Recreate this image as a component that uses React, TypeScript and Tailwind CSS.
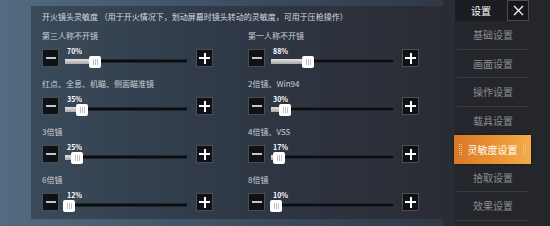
import React from "react";

type Item = { label: string; pct: number; off: number };

const left: Item[] = [
  { label: "第三人称不开镜", pct: 70, off: 24 },
  { label: "红点、全息、机瞄、侧面瞄准镜", pct: 35, off: 11 },
  { label: "3倍镜", pct: 25, off: 6 },
  { label: "6倍镜", pct: 12, off: -2 },
];
const right: Item[] = [
  { label: "第一人称不开镜", pct: 88, off: 31 },
  { label: "2倍镜、Win94", pct: 30, off: 8 },
  { label: "4倍镜、VSS", pct: 17, off: 2 },
  { label: "8倍镜", pct: 10, off: -1 },
];

const menu = ["基础设置", "画面设置", "操作设置", "载具设置", "灵敏度设置", "拾取设置", "效果设置"];

function MinusBtn() {
  return (
    <div className="w-[17px] h-[18px] bg-[#101114] border border-[#4a4d54] flex items-center justify-center shrink-0">
      <div className="w-[10px] h-[2px] bg-[#c4c6ca]" />
    </div>
  );
}

function PlusBtn() {
  return (
    <div className="w-[17px] h-[18px] bg-[#101114] border border-[#4a4d54] flex items-center justify-center shrink-0 relative">
      <div className="absolute w-[11px] h-[2px] bg-white" />
      <div className="absolute w-[2px] h-[11px] bg-white" />
    </div>
  );
}

function Cell({ item }: { item: Item }) {
  return (
    <div className="h-[48px] flex flex-col">
      <div className="text-[8px] leading-[12px] text-[#cdd1d7] whitespace-nowrap">{item.label}</div>
      <div className="mt-[7px] h-[18px] flex items-start">
        <MinusBtn />
        <div className="ml-[6px] w-[122px] flex flex-col">
          <div className="ml-[2px] -mt-[2px] text-[7px] leading-[8px] font-bold text-white">{item.pct}%</div>
          <div className="mt-[4px] h-[4px] bg-[#0b0c0f] border-y border-[#23262d] relative">
            <div
              className="absolute left-0 top-[-1px] h-[5px] bg-gradient-to-b from-[#e2e2e2] to-[#a9a9a9]"
              style={{ width: Math.max(0, item.off + 6) }}
            />
            <div
              className="absolute top-[-4px] w-[12px] h-[12px] bg-white rounded-[2px] flex items-center justify-center gap-[1px]"
              style={{ left: item.off }}
            >
              <div className="w-[1px] h-[6px] bg-[#c0c0c0]" />
              <div className="w-[1px] h-[6px] bg-[#c0c0c0]" />
              <div className="w-[1px] h-[6px] bg-[#c0c0c0]" />
            </div>
          </div>
        </div>
        <div className="ml-[9px]">
          <PlusBtn />
        </div>
      </div>
    </div>
  );
}

function Dots() {
  return (
    <div className="flex flex-col gap-[1px]">
      {[0, 1, 2, 3, 4, 5].map((i) => (
        <div key={i} className="flex gap-[1px]">
          <div className="w-[1px] h-[1px] bg-[#f7c98a]" />
          <div className="w-[1px] h-[1px] bg-[#f7c98a]" />
        </div>
      ))}
    </div>
  );
}

export default function App() {
  return (
    <div
      className="w-[550px] h-[226px] overflow-hidden flex bg-gradient-to-r from-[#536b80] via-[#3a4a5c] to-[#2a2d36]"
      style={{ fontFamily: '"Noto Sans CJK SC", "Noto Sans", sans-serif' }}
    >
      <div className="w-[31px] shrink-0" />
      <div className="w-[412px] h-[213px] mt-[6px] shrink-0 bg-gradient-to-r from-[#3a4a5b] via-[#2f3846] to-[#2a2c34] pl-[11px] pt-[4px]">
        <div className="text-[8px] leading-[14px] text-[#d6dae0] whitespace-nowrap">
          开火镜头灵敏度 （用于开火情况下，划动屏幕时镜头转动的灵敏度，可用于压枪操作）
        </div>
        <div className="mt-[6px] grid grid-cols-[206px_206px]">
          {left.map((l, i) => (
            <React.Fragment key={i}>
              <Cell item={l} />
              <Cell item={right[i]} />
            </React.Fragment>
          ))}
        </div>
      </div>
      <div className="w-[12px] shrink-0 bg-[#2a2c34]" />
      <div className="w-[95px] shrink-0 bg-[#25262c] flex flex-col">
        <div className="h-[21px] flex">
          <div className="w-[52px] h-[21px] bg-[#1c1d22] flex items-center justify-center text-[10px] text-white">
            设置
          </div>
          <div className="w-[22px] h-[21px] bg-[#16171a] border border-[#4b4c50] flex items-center justify-center">
            <svg width="11" height="11" viewBox="0 0 11 11">
              <path d="M1 1L10 10M10 1L1 10" stroke="#f2f2f2" strokeWidth="1.4" />
            </svg>
          </div>
        </div>
        <div className="w-[76px] flex flex-col">
          {menu.map((m, i) =>
            i === 4 ? (
              <div
                key={m}
                className="h-[28.5px] -ml-[1px] w-[77px] bg-gradient-to-r from-[#d8782a] via-[#e8912f] to-[#f3ac4c] flex items-center justify-between px-[5px] shadow-[0_0_2px_rgba(0,0,0,0.5)]"
              >
                <Dots />
                <span className="text-[10px] text-white">{m}</span>
                <Dots />
              </div>
            ) : (
              <div key={m} className="h-[28.5px] flex flex-col">
                <div className="flex-1 flex items-center justify-center text-[10px] text-[#8b8e95]">{m}</div>
                {i !== 3 && <div className="mx-[2px] h-[1px] bg-[#393a40]" />}
              </div>
            )
          )}
        </div>
      </div>
    </div>
  );
}
